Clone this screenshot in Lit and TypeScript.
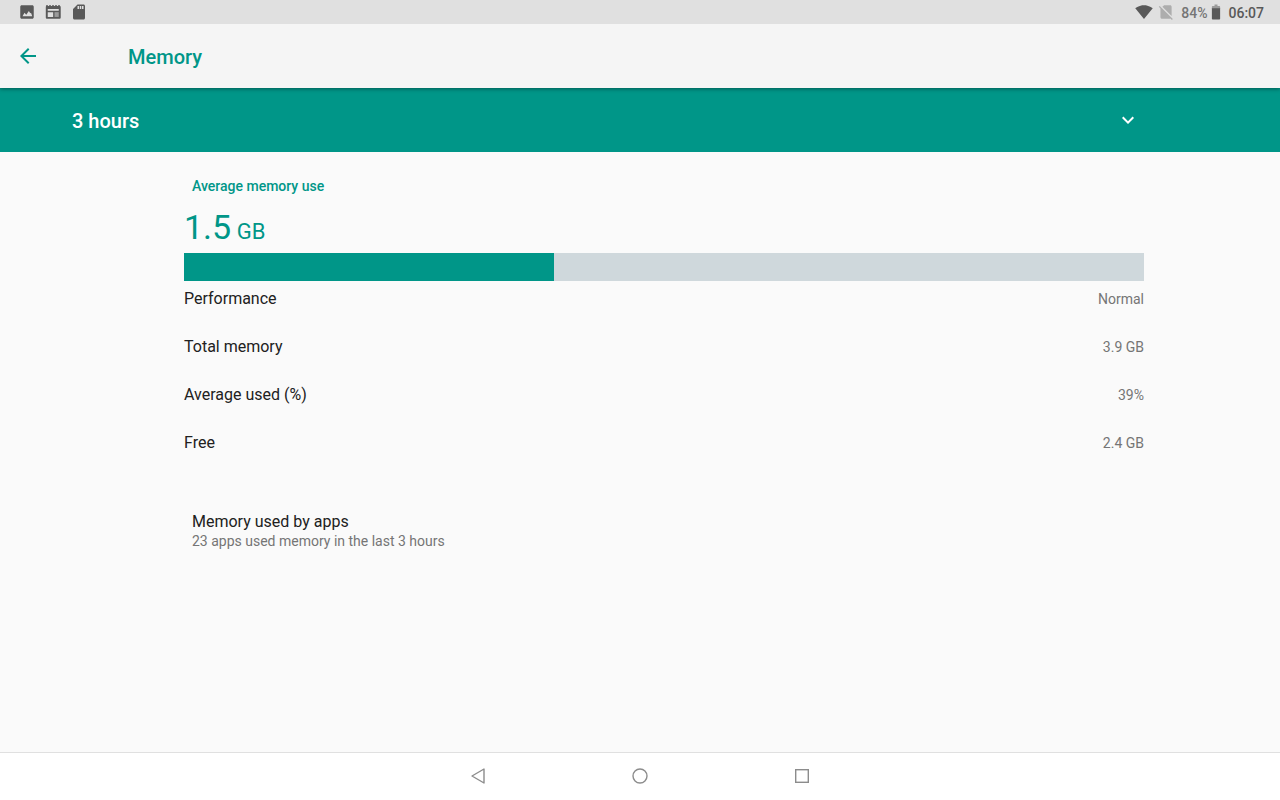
import { LitElement, html, svg, css } from "lit";
import { customElement, property, state } from "lit/decorators.js";

const ICONS = {
  image: svg`<path d="M21 19V5c0-1.100-.9-2-2-2H5c-1.100 0-2 .9-2 2v14c0 1.100.9 2 2 2h14c1.100 0 2-.9 2-2zM6 17.500l2.700-4.500 2.300 2.600 3.500-5 1.800 3.200 1-.8L19 17.500z"/>`,
  calendar: svg`<path fill-rule="evenodd" d="M3 4V2.500h2V4h2V2.500h2V4h2V2.500h2V4h2V2.500h2V4h2V2.500h2V4c.8 0 1.300.6 1.300 1.500v13.800c0 1-.7 1.700-1.700 1.700H4.100c-1 0-1.700-.7-1.700-1.700V5.500C2.400 4.600 2.600 4 3 4zM5 8v2.200h14.700V8zM5 12.200V18.600h7.200v-6.400z"/><path d="M14 12.200h5.700v6.400H14z" fill="#9b9b9b"/>`,
  card: svg`<path d="M18 2h-8L4.020 8 4 20c0 1.100.9 2 2 2h12c1.100 0 2-.9 2-2V4c0-1.100-.9-2-2-2zm-6 6h-2V4h2v4zm3 0h-2V4h2v4zm3 0h-2V4h2v4z"/>`,
  wifi: svg`<path d="M12.010 21.490L23.640 7c-.45-.34-4.930-4-11.640-4C5.280 3 .81 6.660.36 7l11.630 14.490.01.01.01-.01z"/>`,
  noSim: svg`<path d="M19.500 5c0-1.100-.89-2-1.990-2H9.500L7.200 4.880 19.500 17.180V5zM3.650 3.880L2.380 5.150 4.600 7.370V19c0 1.100.9 2 2 2h10.410c.35 0 .67-.1.96-.26l1.880 1.880 1.270-1.270L3.650 3.880z"/>`,
  battery: svg`<path fill="#9b9b9b" d="M17.500 5.330C17.500 4.600 16.900 4 16.170 4H14V2h-4v2H7.830C7.100 4 6.500 4.600 6.500 5.330V8h11V5.330z"/><path d="M6.500 7v13.670C6.500 21.400 7.100 22 7.830 22h8.340c.73 0 1.330-.6 1.330-1.330V7h-11z"/>`,
  back: svg`<path d="M20 11H7.830l5.590-5.590L12 4l-8 8 8 8 1.410-1.410L7.830 13H20v-2z"/>`,
  chevron: svg`<path d="M7.410 8.590L12 13.170l4.590-4.580L18 10l-6 6-6-6z"/>`,
  navBack: svg`<path d="M18 5v14L6 12z" fill="none" stroke="currentColor" stroke-width="1.400" stroke-linejoin="round"/>`,
  navHome: svg`<circle cx="12" cy="12" r="7" fill="none" stroke="currentColor" stroke-width="1.400"/>`,
  navRecent: svg`<rect x="5.700" y="5.700" width="12.600" height="12.600" fill="none" stroke="currentColor" stroke-width="1.400"/>`,
};

type IconName = keyof typeof ICONS;

@customElement("ui-icon")
class UiIcon extends LitElement {
  static styles = css`
    :host { display: block; width: 24px; height: 24px; flex: none; }
    svg { display: block; width: 100%; height: 100%; fill: currentColor; }
  `;
  @property() name: IconName = "image";
  render() {
    return html`<svg viewBox="0 0 24 24" aria-hidden="true">${ICONS[this.name]}</svg>`;
  }
}

@customElement("app-root")
class AppRoot extends LitElement {
  static styles = css`
    :host {
      display: flex;
      flex-direction: column;
      min-height: 100vh;
      background: #fafafa;
      color: #212121;
      font-family: Roboto, sans-serif;
      font-size: 16px;
      line-height: 24px;
    }
    * { box-sizing: border-box; }
    button {
      display: grid;
      place-items: center;
      padding: 0;
      border: 0;
      background: none;
      color: inherit;
      cursor: pointer;
    }
    .status {
      display: flex;
      justify-content: space-between;
      align-items: center;
      height: 24px;
      padding: 0 16px 0 18px;
      background: #e0e0e0;
      color: #595959;
      font-size: 14px;
      font-weight: 500;
      z-index: 2;
    }
    .status ui-icon { width: 18px; height: 18px; }
    .notices { display: flex; gap: 8px; }
    .system { display: flex; align-items: center; }
    .system .sim { margin-left: 4px; color: #adadad; }
    .level { margin-left: 6px; padding-top: 2px; color: #757575; }
    .clock { margin-left: 3px; padding-top: 2px; }
    .toolbar {
      display: flex;
      align-items: center;
      height: 64px;
      padding: 0 16px;
      background: #f5f5f5;
      color: #009688;
      box-shadow: 0 1px 4px rgba(0, 0, 0, 0.4);
      z-index: 1;
    }
    .up { width: 24px; height: 48px; }
    .title {
      margin: 0 0 0 88px;
      padding-top: 2px;
      font-size: 20px;
      font-weight: 500;
    }
    .period {
      display: grid;
      align-items: center;
      height: 64px;
      padding: 0 136px 0 72px;
      background: #009688;
      color: #fff;
    }
    .period select {
      grid-area: 1 / 1;
      width: 100%;
      height: 48px;
      padding: 2px 32px 0 0;
      border: 0;
      appearance: none;
      background: none;
      color: inherit;
      font: 500 20px/24px Roboto, sans-serif;
    }
    .period option { color: #212121; }
    .period ui-icon {
      grid-area: 1 / 1;
      justify-self: end;
      margin-right: 4px;
      pointer-events: none;
    }
    .content { flex: 1; padding: 24px 136px 24px 184px; }
    .category {
      margin: 0;
      padding: 0 8px;
      color: #009688;
      font-size: 14px;
      font-weight: 500;
      line-height: 20px;
    }
    .usage {
      margin: 10px 0 0;
      color: #009688;
      font-size: 34px;
      line-height: 42px;
    }
    .unit { font-size: 22px; }
    .meter { height: 28px; background: #cfd8dc; }
    .fill { height: 100%; background: #009688; }
    .facts { margin: 0; }
    .fact {
      display: flex;
      justify-content: space-between;
      align-items: center;
      height: 48px;
      padding-bottom: 12px;
    }
    .fact dd { margin: 0; color: #757575; font-size: 14px; }
    .apps {
      display: block;
      margin-top: 38px;
      padding: 0 8px;
      color: inherit;
      line-height: 22px;
      text-decoration: none;
    }
    .apps span { display: block; }
    .apps .summary { color: #757575; font-size: 14px; line-height: 16px; }
    .nav {
      display: flex;
      justify-content: center;
      gap: 82px;
      height: 48px;
      border-top: 1px solid #e0e0e0;
      background: #fff;
      color: #8c8c8c;
    }
    .nav button { width: 80px; height: 46px; }
  `;

  @state() private period = "3 hours";

  private periods = ["3 hours", "6 hours", "12 hours", "1 day"];
  private usedPercent = 38.5;
  private facts = [
    ["Performance", "Normal"],
    ["Total memory", "3.9 GB"],
    ["Average used (%)", "39%"],
    ["Free", "2.4 GB"],
  ];

  private onPeriod(e: Event) {
    this.period = (e.target as HTMLSelectElement).value;
  }

  render() {
    return html`
      <div class="status">
        <div class="notices">
          <ui-icon name="image"></ui-icon>
          <ui-icon name="calendar"></ui-icon>
          <ui-icon name="card"></ui-icon>
        </div>
        <div class="system">
          <ui-icon name="wifi"></ui-icon>
          <ui-icon class="sim" name="noSim"></ui-icon>
          <span class="level">84%</span>
          <ui-icon name="battery"></ui-icon>
          <span class="clock">06:07</span>
        </div>
      </div>
      <header class="toolbar">
        <button class="up" aria-label="Navigate up"><ui-icon name="back"></ui-icon></button>
        <h1 class="title">Memory</h1>
      </header>
      <div class="period">
        <select aria-label="Time period" @change=${this.onPeriod}>
          ${this.periods.map((p) => html`<option ?selected=${p === this.period}>${p}</option>`)}
        </select>
        <ui-icon name="chevron"></ui-icon>
      </div>
      <main class="content">
        <h2 class="category">Average memory use</h2>
        <div class="usage">1.5<span class="unit"> GB</span></div>
        <div class="meter" role="meter" aria-label="Average memory use" aria-valuenow=${this.usedPercent}>
          <div class="fill" style="width: ${this.usedPercent}%"></div>
        </div>
        <dl class="facts">
          ${this.facts.map(([name, value]) => html`<div class="fact"><dt>${name}</dt><dd>${value}</dd></div>`)}
        </dl>
        <a class="apps" href="#apps">
          <span>Memory used by apps</span>
          <span class="summary">23 apps used memory in the last ${this.period}</span>
        </a>
      </main>
      <nav class="nav" aria-label="System">
        <button aria-label="Back"><ui-icon name="navBack"></ui-icon></button>
        <button aria-label="Home"><ui-icon name="navHome"></ui-icon></button>
        <button aria-label="Recent apps"><ui-icon name="navRecent"></ui-icon></button>
      </nav>
    `;
  }
}
